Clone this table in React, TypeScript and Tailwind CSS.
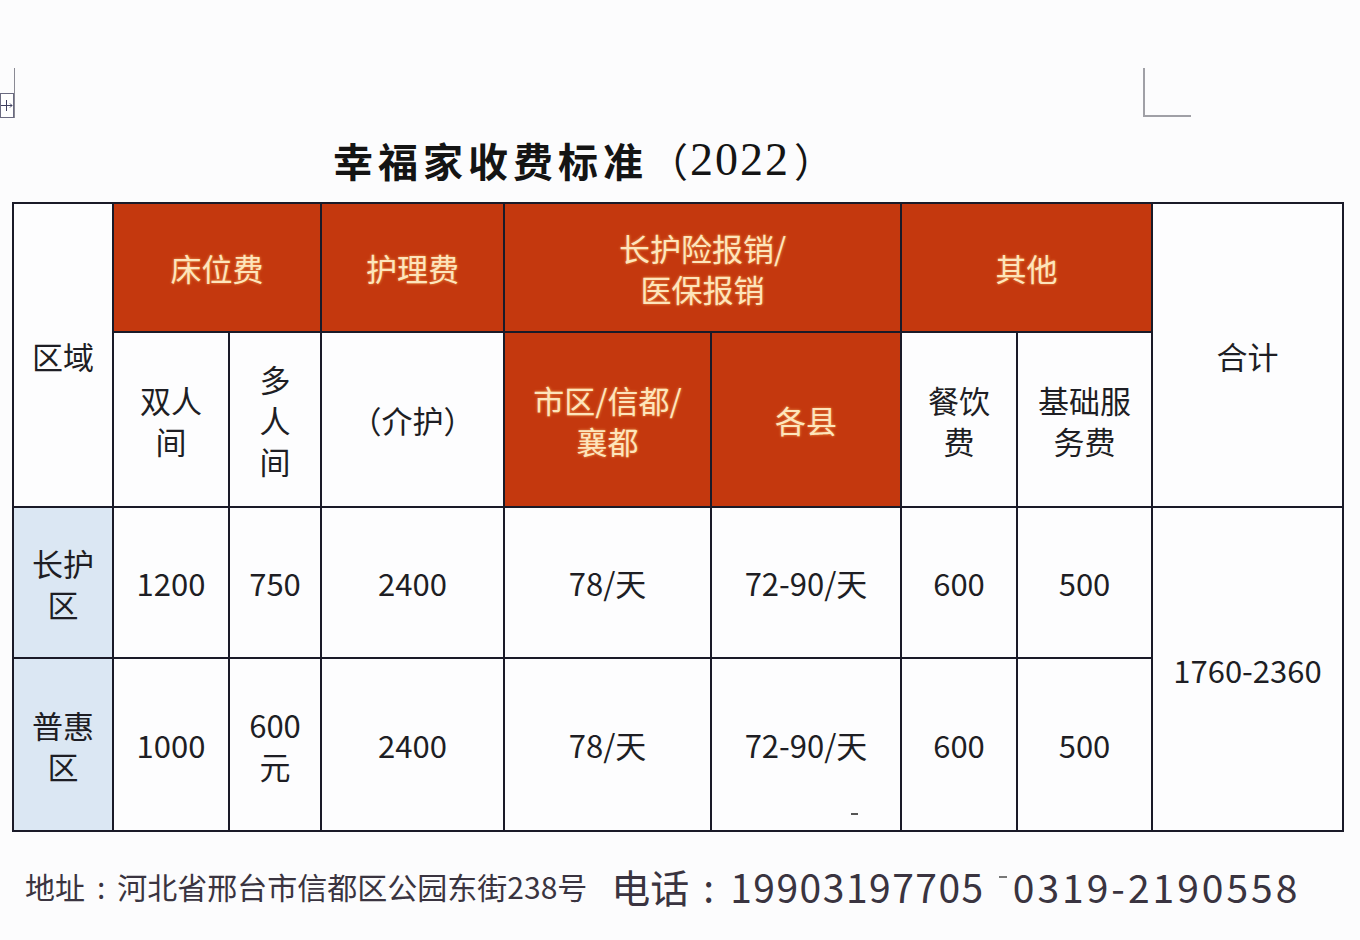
import React from "react";

const CJK = { fontFamily: '"Noto Sans CJK SC", "Noto Sans", sans-serif' };

function Cell({
  children,
  className = "",
}: {
  children: React.ReactNode;
  className?: string;
}) {
  return (
    <div
      className={`flex items-center justify-center text-center text-[31px] leading-[41px] text-[#1e1e24] ${className}`}
    >
      {children}
    </div>
  );
}

function Red({ children, className = "" }: { children: React.ReactNode; className?: string }) {
  return (
    <Cell
      className={`bg-[#c4380e] text-[#fde5bc] [text-shadow:0_0_3px_rgba(255,190,110,0.75)] ${className}`}
    >
      {children}
    </Cell>
  );
}

function White({ children, className = "" }: { children?: React.ReactNode; className?: string }) {
  return <Cell className={`bg-[#fdfdfe] ${className}`}>{children}</Cell>;
}

export default function App() {
  return (
    <div
      className="relative w-[1360px] h-[940px] bg-[#fcfcfd] overflow-hidden"
      style={CJK}
    >
      {/* page marks */}
      <svg
        className="absolute left-0 top-[66px]"
        width="20"
        height="56"
        viewBox="0 0 20 56"
      >
        <line x1="14.5" y1="2" x2="14.5" y2="52" stroke="#8a8a94" strokeWidth="1" />
        <rect x="0.5" y="27.5" width="13" height="24" fill="#fff" stroke="#6a6a80" strokeWidth="1" />
        <line x1="1" y1="39.5" x2="12" y2="39.5" stroke="#404060" strokeWidth="1" />
        <line x1="6.5" y1="34" x2="6.5" y2="45" stroke="#404060" strokeWidth="1" />
        <path d="M10 37.5 L12 39.5 L10 41.5" fill="none" stroke="#404060" strokeWidth="1" />
      </svg>
      <div className="absolute left-[1143px] top-[68px] w-[48px] h-[49px] border-l-2 border-b-2 border-[#a0a0a6]" />

      {/* title */}
      <div className="pt-[134px] pl-[333px] h-[186px]">
        <h1 className="flex items-center text-[40px] leading-[52px] text-[#141414]">
          <span className="font-bold tracking-[5px]">幸福家收费标准</span>
          <span>（</span>
          <span
            className="text-[46px] tracking-[2px] ml-[2px]"
            style={{ fontFamily: '"Liberation Serif", "Noto Sans CJK SC", serif' }}
          >
            2022
          </span>
          <span className="ml-[4px]">）</span>
        </h1>
      </div>

      {/* table */}
      <div className="mt-[16px] ml-[12px] w-[1332px] p-[2px] bg-[#1a1a28] grid gap-[2px] grid-cols-[98px_114px_90px_181px_205px_188px_114px_133px_189px] grid-rows-[127px_173px_149px_171px]">
        <White className="row-span-2">区域</White>
        <Red className="col-span-2">床位费</Red>
        <Red>护理费</Red>
        <Red className="col-span-2">
          长护险报销/
          <br />
          医保报销
        </Red>
        <Red className="col-span-2">其他</Red>
        <White className="row-span-2">合计</White>

        <White>
          双人
          <br />间
        </White>
        <White>
          多<br />人<br />间
        </White>
        <White>（介护）</White>
        <Red>
          市区/信都/
          <br />
          襄都
        </Red>
        <Red>各县</Red>
        <White>
          餐饮
          <br />费
        </White>
        <White>
          基础服
          <br />
          务费
        </White>

        <Cell className="bg-[#dbe7f3]">
          长护
          <br />区
        </Cell>
        <White>1200</White>
        <White>750</White>
        <White>2400</White>
        <White>78/天</White>
        <White>72-90/天</White>
        <White>600</White>
        <White>500</White>
        <White className="row-span-2">1760-2360</White>

        <Cell className="bg-[#dbe7f3]">
          普惠
          <br />区
        </Cell>
        <White>1000</White>
        <White>
          600
          <br />元
        </White>
        <White>2400</White>
        <White>78/天</White>
        <White className="relative">
          72-90/天
          <span className="absolute left-[139px] bottom-[15px] w-[7px] h-[2px] bg-[#555]" />
        </White>
        <White>600</White>
        <White>500</White>
      </div>

      {/* footer */}
      <div className="h-[108px] flex items-center pl-[25px] text-[#3a3440]">
        <span className="text-[30px] leading-[40px]">
          地址<span className="mx-[12px]">:</span>河北省邢台市信都区公园东街238号
        </span>
        <span className="ml-[24px] text-[39px] leading-[48px]">
          电话<span className="ml-[14px] mr-[16px]">:</span>
          <span className="tracking-[1.5px]">19903197705</span>
        </span>
        <span className="ml-[14px] mb-[18px] w-[8px] h-[2px] bg-[#777]" />
        <span className="ml-[6px] text-[39px] leading-[48px] tracking-[3px]">0319-2190558</span>
      </div>
    </div>
  );
}
